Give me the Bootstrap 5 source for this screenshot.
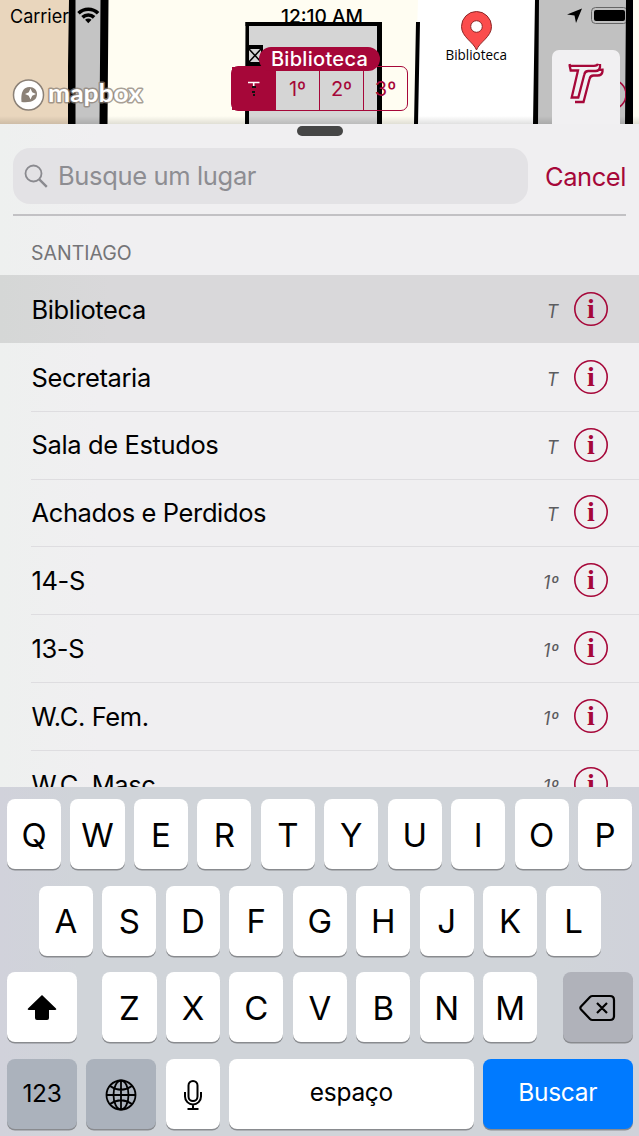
<!DOCTYPE html>
<html lang="pt-BR">
<head>
<meta charset="utf-8">
<meta name="viewport" content="width=device-width, initial-scale=1">
<title>Busca de lugares</title>
<link href="https://cdn.jsdelivr.net/npm/bootstrap@5.3.0/dist/css/bootstrap.min.css" rel="stylesheet">
<style>
  :root { --wine: #a60739; }
  body { width: 639px; height: 1136px; overflow: hidden; background: #f0eff1; color: #000;
    font-family: Inter, "Liberation Sans", sans-serif; line-height: 1; }
  .map-view { height: 124px; }
  .map-view svg text { font-family: Inter, "Liberation Sans", sans-serif; }
  .levels { left: 231px; top: 66px; width: 177px; height: 45px; border: 1.500px solid var(--wine); border-radius: 7px; color: var(--wine); font-size: 20px; }
  .levels > div { flex: 1; display: flex; align-items: center; justify-content: center; border-left: 1.500px solid var(--wine); }
  .levels > div:first-child { background: var(--wine); border-left: 0; }
  .callout { left: 259px; top: 47px; width: 121px; height: 24px; border-radius: 12px; background: var(--wine); color: #fff; font-size: 20px; font-weight: 500; letter-spacing: .3px; }
  .logo-tile { left: 552px; top: 50px; width: 68px; height: 74px; background: #f1f0f2; border-radius: 7px 7px 0 0; }
  .sheet { height: 663px; background: linear-gradient(90deg, #eef0ef 0, #f0eff1 100px); }
  .grabber { width: 46px; height: 10px; margin-top: 2px; border-radius: 5px; background: #464646; }
  .search-line { margin: 12px 13px 0; height: 68px; border-bottom: 2px solid #c2c1c4; }
  .search-field { width: 515px; height: 56px; border-radius: 17px; background: #e3e2e5; color: #8d8d92; font-size: 25.5px; padding-left: 11px; gap: 9px; }
  .search-field span { letter-spacing: -.35px; }
  .cancel { color: var(--wine); font-size: 25.5px; letter-spacing: -.45px; height: 58px; }
  .group-title { height: 59px; padding: 28px 0 0 31px; font-size: 19.5px; color: #747477; }
  .place { height: 67.85px; padding-right: 31px; }
  .place .label-box { margin-left: 31.500px; padding-top: 1px; font-size: 25.5px; letter-spacing: -.38px; }
  .place.chosen { background: linear-gradient(90deg, #d5d7d6 0, #d9d8da 110px); }
  .place .floor { font-size: 18px; font-style: italic; color: #5c5c5f; margin-right: 15.500px; padding-top: 6px; }
  .place + .place:not(.after-chosen) { background: linear-gradient(#dedde0, #dedde0) 31px 0 / 100% 1px no-repeat; }
  .info { width: 34px; height: 34px; }
  .info text { font-family: "Liberation Serif", serif; font-weight: 700; }
  .keyboard { height: 349px; padding: 12px 6.500px 0 7px; display: grid; grid-auto-rows: 70px; row-gap: 16.5px; background: linear-gradient(90deg, #d1d2db 0, #d0d4d9 80px, #d0d4d9 560px, #d0d2da 100%); }
  .keys { display: flex; gap: 9.35px; }
  .keycap { width: 54.1px; height: 70px; border-radius: 8px; background: #fff; box-shadow: 0 1.5px 0 #898b8f; display: flex; align-items: center; justify-content: center; font-size: 33px; flex: none; padding-top: 2px; }
  .keycap.wide { width: 70px; }
  .keycap.soft { background: #abb2bc; }
  .keycap.wordy { font-size: 24.500px; letter-spacing: -.3px; padding: 0 0 3px; }
</style>
</head>
<body>
<main class="d-flex flex-column">
  <section class="map-view position-relative overflow-hidden">
    <svg width="639" height="124" viewBox="0 0 639 124" class="d-block">
      <defs>
        <linearGradient id="shade" x2="0" y2="1"><stop stop-opacity="0"/><stop offset="1" stop-opacity=".12"/></linearGradient>
      </defs>
      <path fill="#fffdf2" d="M0 0h639v124H0z"/>
      <path fill="#e9d6bd" d="M0 0h72v124H0z"/>
      <path fill="#c4c4c4" d="M72 0h33v124H72z"/>
      <path fill="#000" d="M69 0h6.500v124H68V66zM100.500 0h8l-1 124h-8z"/>
      <path fill="#fff" d="M418 0h118v124H414z"/>
      <path fill="#d5d5d5" d="M247 24h133v100H247z"/>
      <path fill="#000" d="M245.500 22H382v102h-5V26H249v98h-4zM416 22h4l-2 102h-4z"/>
      <path fill="#000" d="M246 45h17v21h-17z"/>
      <path fill="#d5d5d5" d="M249 49h12v13h-12z"/><path d="m249 49 12 13m0-13-12 13" stroke="#000" stroke-width="1.600"/>
      <path fill="#c1c1c1" d="M536 0h91v124h-91z"/>
      <path fill="#000" d="M535 0h4l-1 124h-5zM626 0h7v124h-8z"/>
      <text x="10" y="23" font-size="18.500" textLength="59" lengthAdjust="spacingAndGlyphs">Carrier</text>
      <g fill="none" stroke="#000" stroke-width="3.600"><path d="M78.500 13.200a14 14 0 0 1 19.600 0M82.500 17.400a8.300 8.300 0 0 1 11.600 0"/></g>
      <path d="m88.300 23.200-3.200-3.500a4.600 4.600 0 0 1 6.400 0z"/>
      <text x="281" y="23" font-size="18.500" font-weight="500" textLength="82" lengthAdjust="spacingAndGlyphs">12:10 AM</text>
      <path d="M245.500 22H382v4H245.500z"/>
      <path d="M582 8.500 576 23l-1.500-7.500L567 14.500z"/>
      <rect x="591.500" y="7.500" width="36" height="16" rx="4" fill="none" stroke="#666"/><rect x="594" y="10" width="31" height="11" rx="2"/>
      <path d="M626 0h7v40h-7z"/>
      <g stroke="#8b8177" stroke-width="1.500">
        <circle cx="28.500" cy="95" r="15" fill="#fff"/>
        <path d="M21.500 102c-1-10 2-15 8-15 4.500 0 7.500 3 7.500 7 0 6-5 9-15.500 8z" fill="#8b8177" stroke="none"/>
        <path d="m30.500 88.500 1.700 3.800 3.800 1.700-3.800 1.700-1.700 3.800-1.700-3.800L25 94l3.800-1.700z" fill="#fff" stroke="none"/>
      </g>
      <text x="48" y="102" font-size="25" font-weight="700" style="font-family:Lato,sans-serif" fill="#fff" stroke="#8b8177" stroke-width="3" stroke-opacity=".75" paint-order="stroke" stroke-linejoin="round" textLength="94" lengthAdjust="spacingAndGlyphs">mapbox</text>
      <path d="M476.500 50c-3-8-15-13-15-23.500a15 15 0 0 1 30 0c0 10.500-12 15.500-15 23.500z" fill="#fb4d4d" stroke="#8c2828"/><circle cx="476.500" cy="26.500" r="5.800" fill="#fff" stroke="#8c2828"/>
      <text x="445.500" y="60" font-size="14" style="font-family:'Open Sans',sans-serif" textLength="61.500" lengthAdjust="spacingAndGlyphs" stroke="#fff" stroke-width="2" paint-order="stroke">Biblioteca</text>
      <circle cx="611" cy="94.500" r="15" fill="none" stroke="#a60739" stroke-width="1.500"/>
      <path d="M626 60h7v64h-7z"/>
      <path fill="url(#shade)" d="M0 116h639v8H0z"/>
    </svg>
    <div class="levels position-absolute d-flex"><div><svg width="14" height="18"><path d="M1 2.500h11.500M6.700 2v6" stroke="#fff" stroke-width="1.600"/><path d="M5 7h4M5 12h3M6 15h2" stroke="#111" stroke-width="2"/></svg></div><div>1º</div><div>2º</div><div>3º</div></div>
    <div class="callout position-absolute d-flex align-items-center justify-content-center">Biblioteca</div>
    <div class="logo-tile position-absolute">
      <svg width="68" height="74" viewBox="552 50 68 74" fill="none" stroke="#a60739" stroke-width="2.300"><path d="M569.500 64l.6 1.800H594q3.500 0 4-2M569.500 65l1.200 5.500h7.300L571.700 97.500h6.600l6-23q.7-3.500 4-3.500h7.200q4 0 4.500-4V64M575 102h8.500l6-23q.8-3.500 4-3.500h4q4.500 0 5-4V68.500M599.500 69.800h4"/></svg>
    </div>
  </section>

  <section class="sheet overflow-hidden">
    <div class="grabber mx-auto"></div>
    <div class="search-line d-flex justify-content-between">
      <div class="search-field d-flex align-items-center">
        <svg width="25" height="26" fill="none" stroke="#8a8a8f" stroke-width="1.800"><circle cx="9.500" cy="10.500" r="8"/><path d="m15.300 16.300 7.500 7.500" stroke-width="2.400"/></svg>
        <span>Busque um lugar</span>
      </div>
      <div class="cancel d-flex align-items-center">Cancel</div>
    </div>
    <div class="group-title">SANTIAGO</div>
    <div id="places"></div>
  </section>

  <section class="keyboard position-relative">
    <div class="keys" data-letters="QWERTYUIOP"></div>
    <div class="keys justify-content-center" data-letters="ASDFGHJKL"></div>
    <div class="keys">
      <div class="keycap wide"><svg width="30" height="28"><path d="M15 1 1 14.500q-1 1.500 1 1.500h6v8q0 2 2 2h10q2 0 2-2v-8h6q2 0 1-1.500z"/></svg></div>
      <div class="keys ms-auto" style="margin-right:16px" data-letters="ZXCVBNM"></div>
      <div class="keycap wide" style="background:#b0b2ba"><svg width="38" height="28" fill="none" stroke="#000" stroke-width="2.200" stroke-linejoin="round"><path d="M13.500 2H31q4 0 4 4v16q0 4-4 4H13.500q-1.500 0-2.500-1L2 15.500q-1.300-1.500 0-3L11 3q1-1 2.500-1zM18 9l10 10m0-10-10 10"/></svg></div>
    </div>
    <div class="keys">
      <div class="keycap wide wordy soft" style="padding:0">123</div>
      <div class="keycap wide soft"><svg width="32" height="32" fill="none" stroke="#000" stroke-width="1.800"><circle cx="16" cy="16" r="14.500"/><ellipse cx="16" cy="16" rx="7.500" ry="14.500"/><path d="M16 1.500v29M1.500 16h29M5 7q11 7.500 22 0M5 25q11-7.500 22 0"/></svg></div>
      <div class="keycap"><svg width="20" height="32" fill="none" stroke="#000" stroke-width="2"><rect x="5.500" y="2" width="9" height="20" rx="4.500"/><path d="M2 13v4.500a8 8 0 0 0 16 0V13M10 25.500V30M4.500 30h11"/></svg></div>
      <div class="keycap wordy flex-fill">espaço</div>
      <div class="keycap wordy text-white" style="width:149.500px;background:#007aff">Buscar</div>
    </div>
  </section>
</main>
<script>
  const places = [["Biblioteca", "T"], ["Secretaria", "T"], ["Sala de Estudos", "T"], ["Achados e Perdidos", "T"],
    ["14-S", "1º"], ["13-S", "1º"], ["W.C. Fem.", "1º"], ["W.C. Masc.", "1º"]];
  document.getElementById("places").innerHTML = places.map(([name, floor], i) => `
    <div class="place d-flex align-items-center ${i === 0 ? "chosen" : i === 1 ? "after-chosen" : ""}">
      <div class="label-box flex-grow-1">${name}</div>
      <div class="floor">${floor}</div>
      <svg class="info" viewBox="0 0 34 34"><circle cx="17" cy="17" r="16.200" fill="none" stroke="#a60739" stroke-width="1.600"/><text x="17" y="26" text-anchor="middle" font-size="28" fill="#a60739">i</text></svg>
    </div>`).join("");
  document.querySelectorAll("[data-letters]").forEach(row => {
    row.innerHTML = [...row.dataset.letters].map(c => `<div class="keycap">${c}</div>`).join("");
  });
</script>
<script src="https://cdn.jsdelivr.net/npm/bootstrap@5.3.0/dist/js/bootstrap.bundle.min.js"></script>
</body>
</html>
